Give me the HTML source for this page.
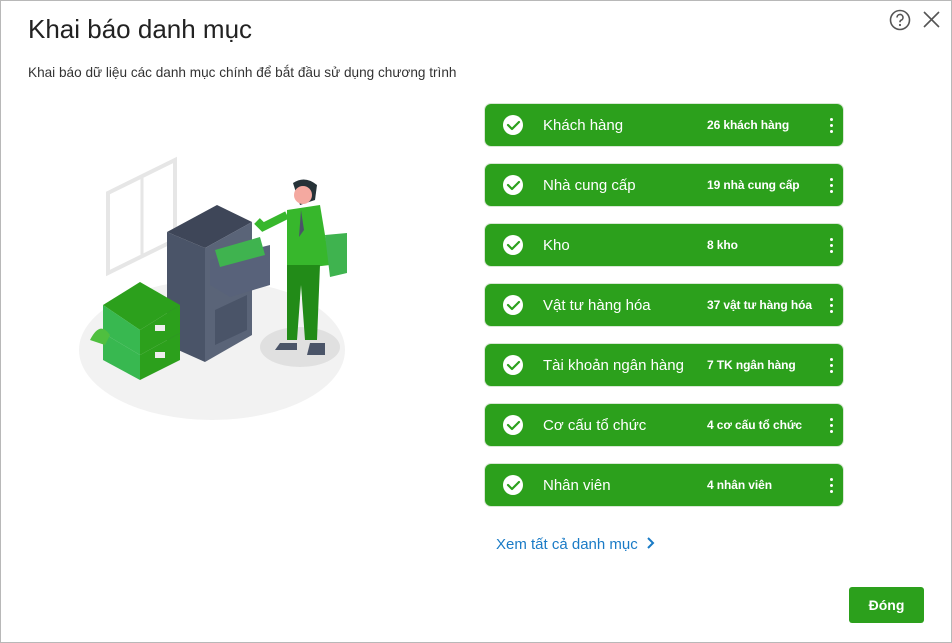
<!DOCTYPE html>
<html><head><meta charset="utf-8"><style>
*{margin:0;padding:0;box-sizing:border-box}
body{width:952px;height:643px;background:#fff;font-family:"Liberation Sans",sans-serif;position:relative;overflow:hidden}
.frame{position:absolute;left:0;top:0;width:952px;height:643px;border:1px solid #b8b8b8}
h1{position:absolute;left:28px;top:14px;font-size:26px;font-weight:normal;color:#222}
.sub{position:absolute;left:28px;top:65px;font-size:13.6px;color:#333}
.row{position:absolute;left:485px;width:358px;height:42px;background:#2ca01c;border-radius:6px;color:#fff;box-shadow:0 0 0 1px #d8e8d4}
.row .ck{position:absolute;left:18px;top:11px;width:20px;height:20px;border-radius:50%;background:#fff}
.row .t{position:absolute;left:58px;top:13px;font-size:15px}
.row .n{position:absolute;left:222px;top:14px;font-size:12px;font-weight:bold;letter-spacing:-0.1px}
.row .d{position:absolute;left:345px;top:14px;width:3px}
.row .d i{display:block;width:3px;height:3px;background:#fff;border-radius:50%;margin-bottom:3px}
.link{position:absolute;left:496px;top:536px;color:#1a7bc6;font-size:15px}
.btn{position:absolute;left:849px;top:587px;width:75px;height:36px;background:#2ca01c;border-radius:3px;color:#fff;font-weight:bold;font-size:14px;text-align:center;line-height:36px}
</style></head><body>
<div class="frame"></div>
<h1>Khai báo danh mục</h1>
<div class="sub">Khai báo dữ liệu các danh mục chính để bắt đầu sử dụng chương trình</div>
<svg style="position:absolute;left:889px;top:9px" width="52" height="22" viewBox="0 0 52 22">
<circle cx="11" cy="11" r="9.5" fill="none" stroke="#555" stroke-width="1.6"/>
<path d="M8 8.5a3 3 0 1 1 4 2.8c-1 .4-1 1-1 2" fill="none" stroke="#555" stroke-width="1.6"/>
<circle cx="11" cy="16" r="1.1" fill="#555"/>
<path d="M35 3l15 15M50 3L35 18" stroke="#555" stroke-width="1.6"/>
</svg>
<svg style="position:absolute;left:75px;top:155px" width="280" height="270" viewBox="0 0 280 270">
<ellipse cx="137" cy="195" rx="133" ry="70" fill="#f2f2f2"/>
<ellipse cx="225" cy="192" rx="40" ry="20" fill="#e0e0e0"/>
<path d="M33 38L100 5V85L33 118Z" fill="none" stroke="#e6e6e6" stroke-width="4"/>
<path d="M67 22V102" stroke="#e6e6e6" stroke-width="3"/>
<path d="M92 77L130 93V207L92 190Z" fill="#4a5468"/>
<path d="M92 77L142 50L177 67L130 93Z" fill="#3e4658"/>
<path d="M130 93L177 67V180L130 207Z" fill="#5a6478"/>
<path d="M140 155L172 140V175L140 190Z" fill="#4a5468"/>
<path d="M135 105L195 90V130L155 142L135 130Z" fill="#58627a"/>
<path d="M140 95L185 82L190 100L145 112Z" fill="#3fb34f"/>
<path d="M28 150L65 127L105 150L65 175Z" fill="#2ca01c"/>
<path d="M28 150V178L65 200V175Z" fill="#38b850"/>
<path d="M65 175V200L105 178V150Z" fill="#2ca01c"/>
<path d="M28 178V205L65 225V200Z" fill="#38b850"/>
<path d="M65 200V225L105 205V178Z" fill="#2ca01c"/>
<rect x="80" y="170" width="10" height="6" fill="#eee"/><rect x="80" y="197" width="10" height="6" fill="#eee"/>
<path d="M15 185Q25 165 35 180L30 190Z" fill="#4fbf3f"/>
<path d="M218 28Q230 20 242 30L240 45L225 50Z" fill="#263238"/>
<circle cx="228" cy="40" r="9" fill="#f4a9a0"/>
<path d="M212 55L245 50L255 110L212 115Z" fill="#37b72c"/>
<path d="M226 55L229 75L224 82Z" fill="#4a5468"/>
<path d="M212 110H245L242 185H230L226 130L222 185H212Z" fill="#228b18"/>
<path d="M250 80L272 78V118L255 122Z" fill="#3fb34f"/>
<path d="M212 60L188 72L182 66" stroke="#37b72c" stroke-width="8" fill="none"/>
<path d="M205 188H222V195H200Z" fill="#4a5468"/>
<path d="M235 188H250V200H232Z" fill="#4a5468"/>
</svg>
<div class="row" style="top:104px"><div class="ck"></div><div class="t">Khách hàng</div><div class="n">26 khách hàng</div><div class="d"><i></i><i></i><i></i></div></div>
<div class="row" style="top:164px"><div class="ck"></div><div class="t">Nhà cung cấp</div><div class="n">19 nhà cung cấp</div><div class="d"><i></i><i></i><i></i></div></div>
<div class="row" style="top:224px"><div class="ck"></div><div class="t">Kho</div><div class="n">8 kho</div><div class="d"><i></i><i></i><i></i></div></div>
<div class="row" style="top:284px"><div class="ck"></div><div class="t">Vật tư hàng hóa</div><div class="n">37 vật tư hàng hóa</div><div class="d"><i></i><i></i><i></i></div></div>
<div class="row" style="top:344px"><div class="ck"></div><div class="t">Tài khoản ngân hàng</div><div class="n">7 TK ngân hàng</div><div class="d"><i></i><i></i><i></i></div></div>
<div class="row" style="top:404px"><div class="ck"></div><div class="t">Cơ cấu tổ chức</div><div class="n">4 cơ cấu tổ chức</div><div class="d"><i></i><i></i><i></i></div></div>
<div class="row" style="top:464px"><div class="ck"></div><div class="t">Nhân viên</div><div class="n">4 nhân viên</div><div class="d"><i></i><i></i><i></i></div></div>
<svg style="position:absolute;left:0;top:0;pointer-events:none" width="952" height="643">
<g fill="none" stroke="#2ca01c" stroke-width="2.2" stroke-linecap="round" stroke-linejoin="round">
<path d="M508 125l4 4 7-7"/><path d="M508 185l4 4 7-7"/><path d="M508 245l4 4 7-7"/><path d="M508 305l4 4 7-7"/><path d="M508 365l4 4 7-7"/><path d="M508 425l4 4 7-7"/><path d="M508 485l4 4 7-7"/>
</g></svg>
<div class="link">Xem tất cả danh mục <svg width="10" height="12" viewBox="0 0 10 12" style="margin-left:4px"><path d="M2 1l5 5-5 5" fill="none" stroke="#1a7bc6" stroke-width="2"/></svg></div>
<div class="btn">Đóng</div>
</body></html>
